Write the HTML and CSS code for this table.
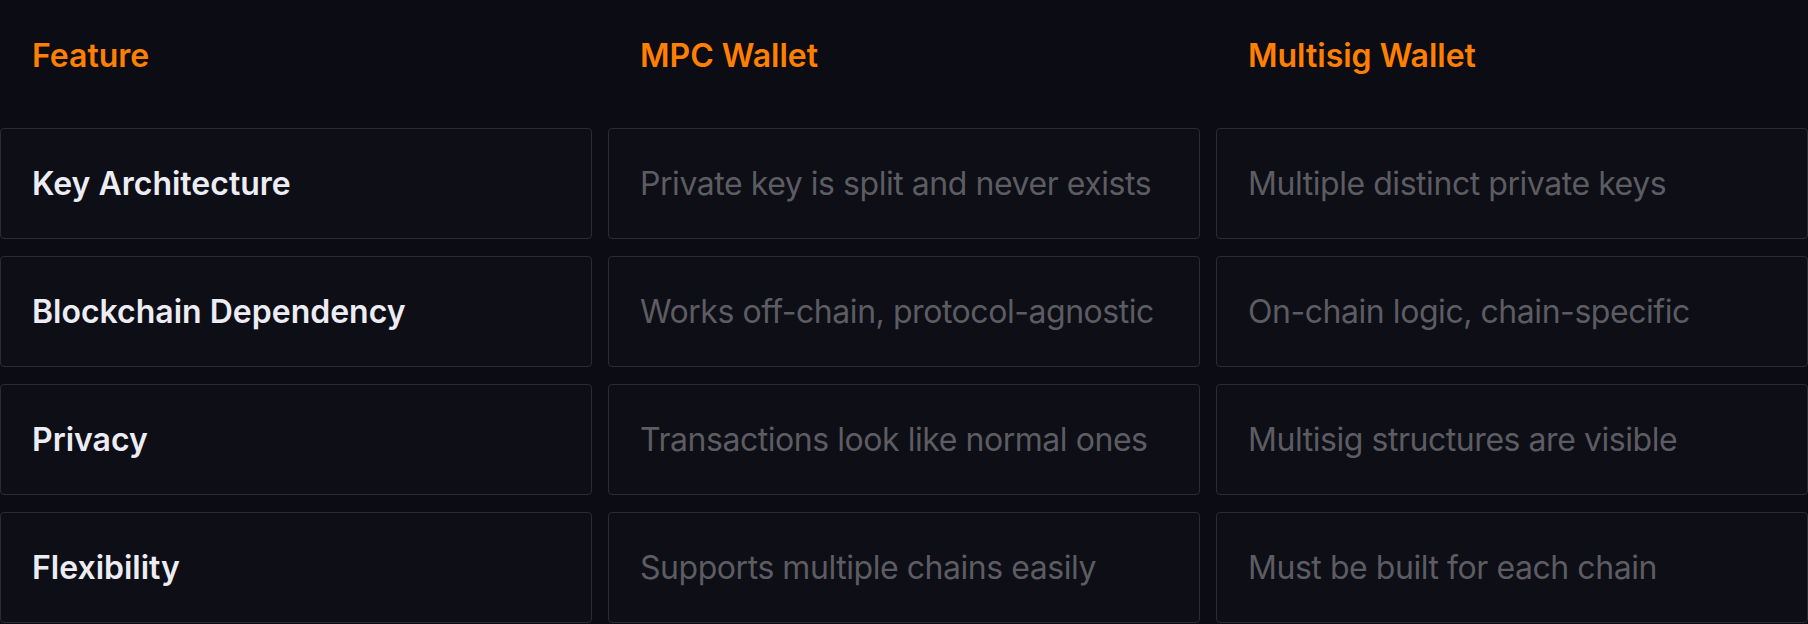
FILE: index.html
```html
<!DOCTYPE html>
<html lang="en">
<head>
    <meta charset="UTF-8">
    <meta name="viewport" content="width=device-width, initial-scale=1.0">
    <title>MPC vs Multisig</title>
    <link rel="stylesheet" href="styles.css">
</head>
<body>

<div class="compare">
    <div class="head">Feature</div>
    <div class="head">MPC Wallet</div>
    <div class="head">Multisig Wallet</div>

    <div class="cell label">Key Architecture</div>
    <div class="cell value">Private key is split and never exists</div>
    <div class="cell value">Multiple distinct private keys</div>

    <div class="cell label">Blockchain Dependency</div>
    <div class="cell value">Works off-chain, protocol-agnostic</div>
    <div class="cell value">On-chain logic, chain-specific</div>

    <div class="cell label">Privacy</div>
    <div class="cell value">Transactions look like normal ones</div>
    <div class="cell value">Multisig structures are visible</div>

    <div class="cell label">Flexibility</div>
    <div class="cell value">Supports multiple chains easily</div>
    <div class="cell value">Must be built for each chain</div>
</div>

</body>
</html>
```

FILE: styles.css
```css
body {
    margin: 0;
    background-color: #0c0c14;
    font-family: 'Inter', 'Noto Sans', sans-serif;
}
.compare {
    display: grid;
    grid-template-columns: repeat(3, 1fr);
    grid-auto-rows: 111px;
    column-gap: 16px;
    row-gap: 17px;
}
.head {
    display: flex;
    align-items: center;
    padding: 0 32px;
    color: #ff8000;
    font-size: 32px;
    font-weight: 600;
}
.cell {
    display: flex;
    align-items: center;
    padding: 0 31px;
    border: 1px solid #2b2b32;
    border-radius: 4px;
    background-color: #0e0e16;
    font-size: 32px;
}
.label {
    color: #ececf4;
    font-weight: 600;
}
.value {
    color: #5c5c62;
    font-weight: 400;
    letter-spacing: -0.45px;
}
```
